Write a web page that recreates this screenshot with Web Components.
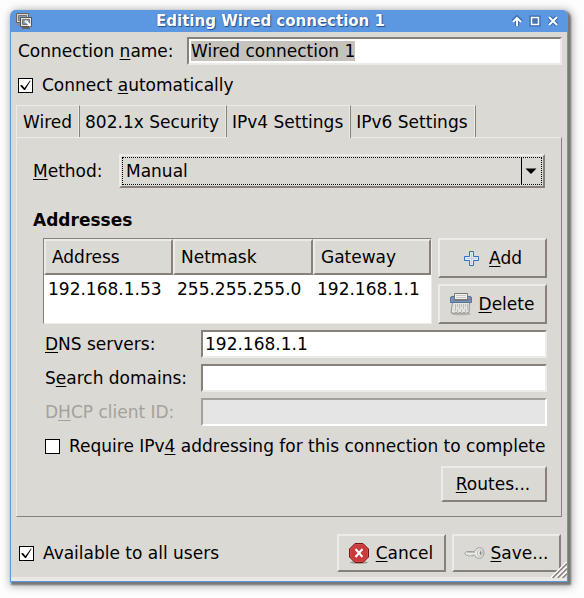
<!DOCTYPE html>
<html lang="en">
<head>
<meta charset="UTF-8">
<meta name="viewport" content="width=device-width, initial-scale=1.0">
<title>Editing Wired connection 1</title>
<style>
    :root {
        --face: #dbd9d4;
        --light: #edebe8;
        --dark: #878179;
        --accent: #5c97e2;
        --ink: #000;
    }
    body {
        margin: 0;
        padding: 10px 16px 16px 10px;
        background: #fdfdfd;
        color: var(--ink);
        font: 17px/20px "DejaVu Sans", sans-serif;
    }
    u {
        text-decoration-thickness: 1px;
        text-underline-offset: 2px;
        text-decoration-skip-ink: none;
    }
</style>
</head>
<body>
<dialog-window>
    <title-bar slot="title">Editing Wired connection 1</title-bar>

    <form-field indent label-size="wide" value="Wired connection 1" selected>Connection <u>n</u>ame:</form-field>
    <check-item indent checked>Connect <u>a</u>utomatically</check-item>

    <tab-book>
        <tab-item slot="tabs" first>Wired</tab-item>
        <tab-item slot="tabs">802.1x Security</tab-item>
        <tab-item slot="tabs" active>IPv4 Settings</tab-item>
        <tab-item slot="tabs">IPv6 Settings</tab-item>

        <method-picker><u>M</u>ethod:</method-picker>
        <address-group>
            <span slot="heading">Addresses</span>
            <address-table slot="table"></address-table>
            <push-button slot="actions">
                <svg slot="icon" width="22" height="22" viewBox="1 0 22 22">
                    <path d="M9.500 4.500h4v5h5v4h-5v5h-4v-5h-5v-4h5z" fill="#b9d2ee" stroke="#3b6fb4"/>
                    <path d="M10.500 5.500h2v5h5v2h-5v5h-2v-5h-5v-2h5z" fill="none" stroke="#e2edf8"/>
                </svg>
                <u>A</u>dd
            </push-button>
            <push-button slot="actions">
                <svg slot="icon" width="24" height="24" viewBox="0 0 24 24">
                    <ellipse cx="12" cy="22" rx="10" ry="1.500" fill="#b7b5b0"/>
                    <path d="M3.500 10.500h17l-.5 10q-1 1-2 0l-1 1-2-1-2 1-2-1-2 1-2-1-2 1-3-1z" fill="#e4e4e0" stroke="#91938e"/>
                    <path d="M6.500 12v7M8.500 12v3m0 2v3M10.500 12v5M12.500 12v3m0 2v3M14.500 12v5M16.500 12v3m0 2v3M18.500 12v6" stroke="#bcbdb9" fill="none"/>
                    <path d="M1.500 10.500V6q0-1.500 1.500-1.500h18q1.500 0 1.500 1.500v4.500z" fill="#6c96cb" stroke="#5d7290"/>
                    <path d="M5.500 8V1.500h13V8z" fill="#f1f1ee" stroke="#777973"/>
                    <path d="M7 3.500h10M7 5.500h10" stroke="#c6c7c3"/>
                    <path d="M4.500 7.500h14.500v1H4.500z" fill="#e7e8e5" stroke="#777a7b"/>
                    <path d="M19.500 7.500h2" stroke="#d33e4d"/>
                </svg>
                <u>D</u>elete
            </push-button>

            <form-field value="192.168.1.1"><u>D</u>NS servers:</form-field>
            <form-field>S<u>e</u>arch domains:</form-field>
            <form-field disabled>D<u>H</u>CP client ID:</form-field>
            <check-item>Require IPv<u>4</u> addressing for this connection to complete</check-item>
            <push-button size="small" slot="more"><u>R</u>outes...</push-button>
        </address-group>
    </tab-book>

    <check-item slot="footer" grow checked>Available to all users</check-item>
    <push-button slot="footer">
        <svg slot="icon" width="22" height="22" viewBox="0 0 22 22">
            <ellipse cx="11" cy="20.500" rx="9" ry="1.500" fill="#9c9a96"/>
            <path d="M7 1.500h8L20.500 7v8L15 20.500H7L1.500 15V7z" fill="#cb3a3c" stroke="#7c1417"/>
            <path d="M7.500 2.500h7l5 5v7l-5 5h-7l-5-5v-7z" fill="none" stroke="#d04a4a"/>
            <path d="M7.500 7l7 8M14.500 7l-7 8" stroke="#fff" stroke-width="2"/>
        </svg>
        <u>C</u>ancel
    </push-button>
    <push-button slot="footer">
        <svg slot="icon" width="22" height="22" viewBox="0 0 22 22">
            <path d="M1.500 11.500l2-2h8q1.500-4 5-4c3 0 4.500 2.500 4.500 5.500s-2 5.500-4.500 5.500q-4 0-5-3.500H10l-1 1.500-1.500-1.500-1.500 1.500-1.500-1.500H3z" fill="#e7e7e4" stroke="#a0a19d"/>
            <path d="M4 10.500h8" stroke="#bdbeb9"/>
            <ellipse cx="17" cy="11" rx="2.500" ry="3.500" fill="#f6f6f4" stroke="#b7b8b4"/>
            <ellipse cx="17.500" cy="11" rx="1" ry="2" fill="#858681"/>
        </svg>
        <u>S</u>ave...
    </push-button>
</dialog-window>

<script>
class DialogWindow extends HTMLElement {
    connectedCallback() {
        this.attachShadow({ mode: 'open' });
        this.shadowRoot.innerHTML = `
            <style>
                :host {
                    display: block;
                    position: relative;
                    background: var(--face);
                    border: 1px solid var(--accent);
                    border-top: 0;
                    border-radius: 6px 6px 0 0;
                    box-shadow: 2px 2px 2px 1px #777, 2px 2px 8px 2px #aaa;
                }
                .body {
                    display: flex;
                    flex-direction: column;
                    gap: 6px;
                    padding: 5px;
                }
                footer {
                    display: flex;
                    align-items: center;
                    gap: 6px;
                    padding: 11px 1px 0 3px;
                }
                .edge {
                    height: 4px;
                    background: #e9e8e5;
                }
                .grip {
                    position: absolute;
                    right: 0;
                    bottom: 3px;
                }
            </style>
            <slot name="title"></slot>
            <div class="body">
                <slot></slot>
                <footer><slot name="footer"></slot></footer>
            </div>
            <div class="edge"></div>
            <svg class="grip" width="16" height="16" viewBox="0 0 16 16">
                <path d="M0 16L16 0V16z" fill="#dbd9d4"/>
                <path d="M0 16L16 0M5 16L16 5M10 16l6-6" stroke="#fff" stroke-width="2"/>
                <path d="M1.500 16L16 1.500M6.500 16L16 6.500M11.500 16l4.500-4.500" stroke="#878179" stroke-width="1.500"/>
            </svg>
        `;
    }
}

class TitleBar extends HTMLElement {
    connectedCallback() {
        this.attachShadow({ mode: 'open' });
        this.shadowRoot.innerHTML = `
            <style>
                :host {
                    display: flex;
                    align-items: center;
                    height: 22px;
                    padding: 0 6px 0 5px;
                    background: var(--accent);
                    border-radius: 5px 5px 0 0;
                    color: #fff;
                }
                h1 {
                    flex: 1;
                    margin: 0;
                    font-size: 15px;
                    line-height: 24px;
                    text-align: center;
                    text-shadow: 1px 1px 1px #24518f, 0 0 1px #24518f;
                }
                .controls {
                    display: flex;
                    gap: 2px;
                }
                button {
                    display: flex;
                    padding: 0;
                    border: 0;
                    background: none;
                }
            </style>
            <svg width="16" height="16" viewBox="0 0 16 16">
                <path d="M.5.500h12v9H.5z" fill="#d8d8d2" stroke="#65635c"/>
                <path d="M2.500 2.500h8v5h-8z" fill="#809bbd" stroke="#77756e"/>
                <path d="M1 11.500h4" stroke="#8a8880" stroke-width="2"/>
                <path d="M4.500 4.500h11v9h-11z" fill="#e8e7e2" stroke="#55534c"/>
                <path d="M6.500 6.500h7v5h-7z" fill="#7895b8" stroke="#77756e"/>
                <path d="M6 15h8" stroke="#66645d" stroke-width="2"/>
                <path d="M10 8l4.500 5" stroke="#fff" stroke-width="2"/>
                <circle cx="10" cy="8.500" r="1.500" fill="#e4e4e0"/>
            </svg>
            <h1><slot></slot></h1>
            <div class="controls">
                <button type="button" aria-label="Shade">
                    <svg width="16" height="16" viewBox="0 0 16 16"><path d="M8 13V5M4 8.500L8 4.500l4 4" fill="none" stroke="#3768aa" stroke-width="4"/><path d="M8 13V5M4 9L8 5l4 4" fill="none" stroke="#fff" stroke-width="2"/></svg>
                </button>
                <button type="button" aria-label="Maximize">
                    <svg width="16" height="16" viewBox="0 0 16 16"><path d="M4 4h8v8H4z" fill="none" stroke="#3768aa" stroke-width="3"/><path d="M4.500 4.500h7v7h-7z" fill="#4576b8" stroke="#fff" stroke-width="1.500"/></svg>
                </button>
                <button type="button" aria-label="Close">
                    <svg width="16" height="16" viewBox="0 0 16 16"><path d="M4 4l8 8M12 4l-8 8" stroke="#3768aa" stroke-width="4"/><path d="M4 4l8 8M12 4l-8 8" stroke="#fff" stroke-width="2"/></svg>
                </button>
            </div>
        `;
    }
}

class FormField extends HTMLElement {
    connectedCallback() {
        this.attachShadow({ mode: 'open' });
        this.shadowRoot.innerHTML = `
            <style>
                :host {
                    display: grid;
                    grid-template-columns: 156px 1fr;
                    align-items: center;
                }
                :host([label-size="wide"]) {
                    grid-template-columns: 169px 1fr;
                }
                :host([indent]) {
                    padding-left: 2px;
                }
                :host([disabled]) {
                    color: #a3a19c;
                }
                input {
                    box-sizing: border-box;
                    width: 100%;
                    min-width: 0;
                    height: 28px;
                    padding: 0 2px;
                    border: 2px solid;
                    border-color: var(--dark) var(--light) var(--light) var(--dark);
                    border-radius: 0;
                    outline: 0;
                    background: #fff;
                    color: var(--ink);
                    font: inherit;
                }
                input:disabled {
                    border-color: #a3a09b #fff #fff #a3a09b;
                    background: #e5e5e5;
                }
                input::selection {
                    background: #c5c2bd;
                    color: #000;
                }
            </style>
            <label for="entry"><slot></slot></label>
            <input id="entry" type="text">
        `;

        const input = this.shadowRoot.getElementById('entry');
        input.value = this.getAttribute('value') || '';
        input.disabled = this.hasAttribute('disabled');
        if (this.hasAttribute('selected')) {
            input.focus();
            input.select();
        }
    }
}

class CheckItem extends HTMLElement {
    connectedCallback() {
        this.attachShadow({ mode: 'open' });
        this.shadowRoot.innerHTML = `
            <style>
                :host {
                    display: block;
                }
                :host([indent]) {
                    padding-left: 2px;
                }
                :host([grow]) {
                    flex: 1;
                }
                label {
                    display: flex;
                    align-items: center;
                    gap: 9px;
                    height: 28px;
                    white-space: nowrap;
                }
                .box {
                    display: grid;
                }
                input, svg {
                    grid-area: 1 / 1;
                    width: 15px;
                    height: 15px;
                    margin: 0;
                }
                input {
                    appearance: none;
                    border: 1px solid #000;
                    background: #fff;
                }
                svg {
                    visibility: hidden;
                    pointer-events: none;
                }
                input:checked + svg {
                    visibility: visible;
                }
            </style>
            <label>
                <span class="box">
                    <input type="checkbox">
                    <svg viewBox="0 0 15 15"><path d="M2 7.500l2-.5 2.500 3L12 2.500l.5.500L7 12H6z" fill="#000"/></svg>
                </span>
                <span><slot></slot></span>
            </label>
        `;
        this.shadowRoot.querySelector('input').checked = this.hasAttribute('checked');
    }
}

class PushButton extends HTMLElement {
    connectedCallback() {
        this.attachShadow({ mode: 'open' });
        this.shadowRoot.innerHTML = `
            <style>
                :host {
                    display: block;
                }
                button {
                    display: flex;
                    align-items: center;
                    justify-content: center;
                    gap: 6px;
                    box-sizing: border-box;
                    width: 109px;
                    height: 40px;
                    padding: 0 2px 0 0;
                    border: 2px solid;
                    border-color: var(--light) var(--dark) var(--dark) var(--light);
                    background: var(--face);
                    color: inherit;
                    font: inherit;
                }
                :host([slot="footer"]) button {
                    height: 38px;
                }
                :host([size="small"]) button {
                    width: 106px;
                    height: 36px;
                }
                ::slotted(svg) {
                    flex: none;
                }
            </style>
            <button type="button"><slot name="icon"></slot><span><slot></slot></span></button>
        `;
    }
}

class TabItem extends HTMLElement {
    connectedCallback() {
        this.attachShadow({ mode: 'open' });
        this.shadowRoot.innerHTML = `
            <style>
                :host {
                    display: block;
                }
                button {
                    box-sizing: border-box;
                    height: 32px;
                    padding: 0 7px 0 5px;
                    border: 0 solid;
                    border-width: 1px 1px 0 0;
                    border-color: var(--light) var(--dark);
                    background: var(--face);
                    box-shadow: inset -1px 0 var(--light);
                    color: inherit;
                    font: inherit;
                    white-space: nowrap;
                }
                :host([first]) button {
                    padding-left: 6px;
                    border-left: 1px solid var(--light);
                }
                /* the open tab covers the top line of the page */
                :host([active]) button {
                    position: relative;
                    height: 33px;
                    padding-bottom: 1px;
                }
            </style>
            <button type="button" role="tab"><slot></slot></button>
        `;
        this.shadowRoot.querySelector('button').setAttribute('aria-selected', this.hasAttribute('active'));
    }
}

class TabBook extends HTMLElement {
    connectedCallback() {
        this.attachShadow({ mode: 'open' });
        this.shadowRoot.innerHTML = `
            <style>
                :host {
                    display: block;
                }
                .tabs {
                    display: flex;
                    height: 32px;
                }
                .page {
                    padding: 16px 14px 14px 16px;
                    border: 1px solid;
                    border-color: var(--light) var(--dark) var(--dark) var(--light);
                }
            </style>
            <div class="tabs" role="tablist"><slot name="tabs"></slot></div>
            <div class="page"><slot></slot></div>
        `;
    }
}

class MethodPicker extends HTMLElement {
    connectedCallback() {
        this.attachShadow({ mode: 'open' });
        this.shadowRoot.innerHTML = `
            <style>
                :host {
                    display: grid;
                    grid-template-columns: 86px 1fr;
                    align-items: center;
                    padding-right: 2px;
                }
                .combo {
                    display: grid;
                }
                select, svg {
                    grid-area: 1 / 1;
                }
                select {
                    appearance: none;
                    box-sizing: border-box;
                    width: 100%;
                    height: 34px;
                    padding: 0 24px 0 5px;
                    border: 2px solid;
                    border-color: var(--light) var(--dark) var(--dark) var(--light);
                    border-radius: 0;
                    outline: 1px dotted #000;
                    outline-offset: -4px;
                    background: var(--face);
                    color: inherit;
                    font: inherit;
                }
                svg {
                    place-self: center end;
                    pointer-events: none;
                }
            </style>
            <label for="method"><slot></slot></label>
            <div class="combo">
                <select id="method">
                    <option>Automatic (DHCP)</option>
                    <option selected>Manual</option>
                    <option>Link-Local Only</option>
                    <option>Disabled</option>
                </select>
                <svg width="24" height="26" viewBox="0 0 24 26">
                    <path d="M.5 0v26" stroke="#000"/>
                    <path d="M4.500 10.500h11L10 16z" fill="#000"/>
                </svg>
            </div>
        `;
    }
}

class AddressTable extends HTMLElement {
    connectedCallback() {
        this.attachShadow({ mode: 'open' });
        this.shadowRoot.innerHTML = `
            <style>
                :host {
                    display: block;
                    background: #fff;
                    border: 1px solid;
                    border-color: var(--dark) var(--light) var(--light) var(--dark);
                }
                table {
                    width: 100%;
                    border-collapse: separate;
                    border-spacing: 0;
                    table-layout: fixed;
                }
                th {
                    box-sizing: border-box;
                    height: 36px;
                    padding: 0 6px;
                    background: var(--face);
                    border: 2px solid;
                    border-color: var(--light) var(--dark) var(--dark) var(--light);
                    font-weight: normal;
                    text-align: left;
                }
                td {
                    height: 28px;
                    padding: 0 4px;
                    white-space: nowrap;
                }
                .address {
                    width: 129px;
                }
                .netmask {
                    width: 140px;
                }
            </style>
            <table>
                <colgroup><col class="address"><col class="netmask"><col></colgroup>
                <thead><tr><th>Address</th><th>Netmask</th><th>Gateway</th></tr></thead>
                <tbody><tr><td>192.168.1.53</td><td>255.255.255.0</td><td>192.168.1.1</td></tr></tbody>
            </table>
        `;
    }
}

class AddressGroup extends HTMLElement {
    connectedCallback() {
        this.attachShadow({ mode: 'open' });
        this.shadowRoot.innerHTML = `
            <style>
                :host {
                    display: block;
                }
                h2 {
                    margin: 22px 0 8px;
                    font-size: 17px;
                    line-height: 20px;
                }
                .list {
                    display: grid;
                    grid-template-columns: 1fr auto;
                    gap: 6px;
                    padding-left: 10px;
                }
                .actions, .fields {
                    display: flex;
                    flex-direction: column;
                    gap: 6px;
                }
                .fields {
                    padding: 6px 0 6px 12px;
                }
                .more {
                    display: flex;
                    justify-content: flex-end;
                }
            </style>
            <h2><slot name="heading"></slot></h2>
            <div class="list">
                <slot name="table"></slot>
                <div class="actions"><slot name="actions"></slot></div>
            </div>
            <div class="fields"><slot></slot></div>
            <div class="more"><slot name="more"></slot></div>
        `;
    }
}

customElements.define('dialog-window', DialogWindow);
customElements.define('title-bar', TitleBar);
customElements.define('form-field', FormField);
customElements.define('check-item', CheckItem);
customElements.define('push-button', PushButton);
customElements.define('tab-item', TabItem);
customElements.define('tab-book', TabBook);
customElements.define('method-picker', MethodPicker);
customElements.define('address-table', AddressTable);
customElements.define('address-group', AddressGroup);
</script>
</body>
</html>
